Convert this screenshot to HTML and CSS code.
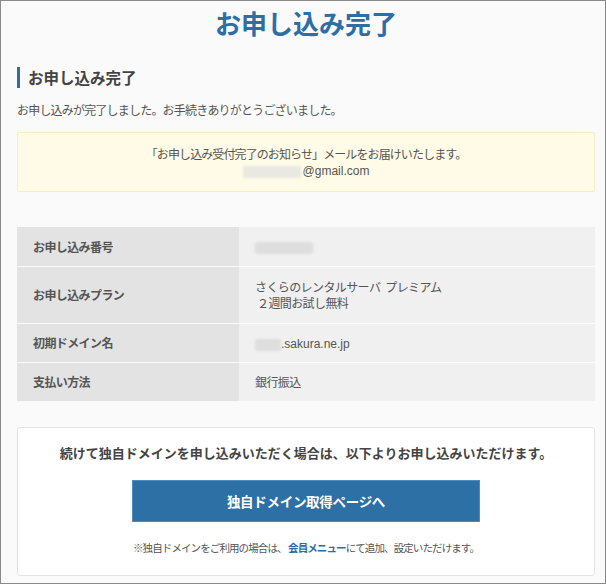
FILE: index.html
```html
<!DOCTYPE html>
<html lang="ja">
<head>
<meta charset="utf-8">
<title>お申し込み完了</title>
<link rel="stylesheet" href="styles.css">
</head>
<body>
<div class="page">
  <h1 class="title">お申し込み完了</h1>
  <h2 class="heading">お申し込み完了</h2>
  <p class="lead">お申し込みが完了しました。お手続きありがとうございました。</p>
  <div class="notice">
    <p>「お申し込み受付完了のお知らせ」メールをお届けいたします。</p>
    <p><span class="blur blur-mail"></span><span class="latin">@gmail.com</span></p>
  </div>
  <table class="info">
    <tr>
      <th>お申し込み番号</th>
      <td><span class="blur blur-num"></span></td>
    </tr>
    <tr class="tall">
      <th>お申し込みプラン</th>
      <td>さくらのレンタルサーバ<span class="gap"> </span>プレミアム<br><span class="sub">２週間お試し無料</span></td>
    </tr>
    <tr>
      <th>初期ドメイン名</th>
      <td><span class="blur blur-dom"></span><span class="latin">.sakura.ne.jp</span></td>
    </tr>
    <tr>
      <th>支払い方法</th>
      <td>銀行振込</td>
    </tr>
  </table>
  <div class="card">
    <p class="card-lead">続けて独自ドメインを申し込みいただく場合は、以下よりお申し込みいただけます。</p>
    <a class="btn" href="#">独自ドメイン取得ページへ</a>
    <p class="card-note">※独自ドメインをご利用の場合は、 <a class="link" href="#">会員メニュー</a>にて追加、設定いただけます。</p>
  </div>
</div>
</body>
</html>
```

FILE: styles.css
```css
* { box-sizing: border-box; }
html, body { margin: 0; padding: 0; }
body {
  font-family: "Noto Sans CJK JP", "Noto Sans", sans-serif;
  color: #555;
  background: #fafafa;
}
.page {
  width: 606px;
  height: 584px;
  border: 1px solid #8a8a8a;
  background: #fafafa;
  padding: 0 10px 0 16px;
  overflow: hidden;
}
.title {
  margin: 5px 0 0;
  text-align: center;
  font-size: 26px;
  line-height: 34px;
  font-weight: bold;
  color: #2c6ea5;
}
.heading {
  margin: 27px 0 0;
  border-left: 3px solid #2c6ea5;
  padding-left: 8px;
  font-size: 15.5px;
  line-height: 21px;
  font-weight: bold;
  color: #444;
}
.lead {
  margin: 13px 0 0;
  font-size: 12px;
  line-height: 17px;
  letter-spacing: -0.8px;
}
.notice {
  margin-top: 14px;
  background: #fffbe6;
  border: 1px solid #f6eec8;
  border-radius: 2px;
  padding: 13px 0 12px;
  text-align: center;
  font-size: 12px;
  line-height: 16px;
  letter-spacing: -0.9px;
}
.notice p { margin: 0; }
.latin { letter-spacing: 0; font-family: "Liberation Sans", "Noto Sans CJK JP", sans-serif; }
.gap { display: inline-block; width: 5px; }
.blur {
  display: inline-block;
  vertical-align: middle;
  height: 12px;
  background: #e9e8e2;
  border-radius: 2px;
  filter: blur(1px);
}
.blur-mail { width: 58px; margin-right: 2px; }
.blur-num { width: 58px; background: #dedede; }
.blur-dom { width: 26px; background: #dedede; }
.info {
  margin-top: 35px;
  width: 100%;
  border-collapse: collapse;
  font-size: 12px;
  letter-spacing: -0.6px;
}
.info th, .info td {
  height: 39px;
  padding: 0 16px;
  text-align: left;
  vertical-align: middle;
  border-top: 1px solid #fcfcfc;
}
.info tr:first-child th, .info tr:first-child td { border-top: none; }
.info tr.tall th, .info tr.tall td { height: 57px; line-height: 16px; }
.info th {
  width: 222px;
  background: #e3e3e3;
  font-weight: bold;
  color: #555;
}
.info td { background: #f0f0f0; color: #555; }
.sub { padding-left: 2px; }
.card {
  margin-top: 26px;
  background: #fff;
  border: 1px solid #e3e3e3;
  border-radius: 3px;
  padding: 16px 0 20px;
  text-align: center;
}
.card-lead {
  margin: 0;
  font-size: 13px;
  line-height: 18px;
  font-weight: bold;
  color: #444;
}
.btn {
  display: block;
  width: 348px;
  height: 42px;
  margin: 18px auto 0;
  background: #2c70a5;
  border: 1px solid #4d8cc0;
  color: #fff;
  font-size: 13.5px;
  line-height: 40px;
  font-weight: bold;
  letter-spacing: -0.3px;
  text-decoration: none;
}
.card-note {
  margin: 18px 0 0;
  font-size: 10.5px;
  line-height: 15px;
  letter-spacing: -0.9px;
  color: #555;
}
.link {
  color: #2c6ea5;
  font-weight: bold;
  text-decoration: none;
}
```
